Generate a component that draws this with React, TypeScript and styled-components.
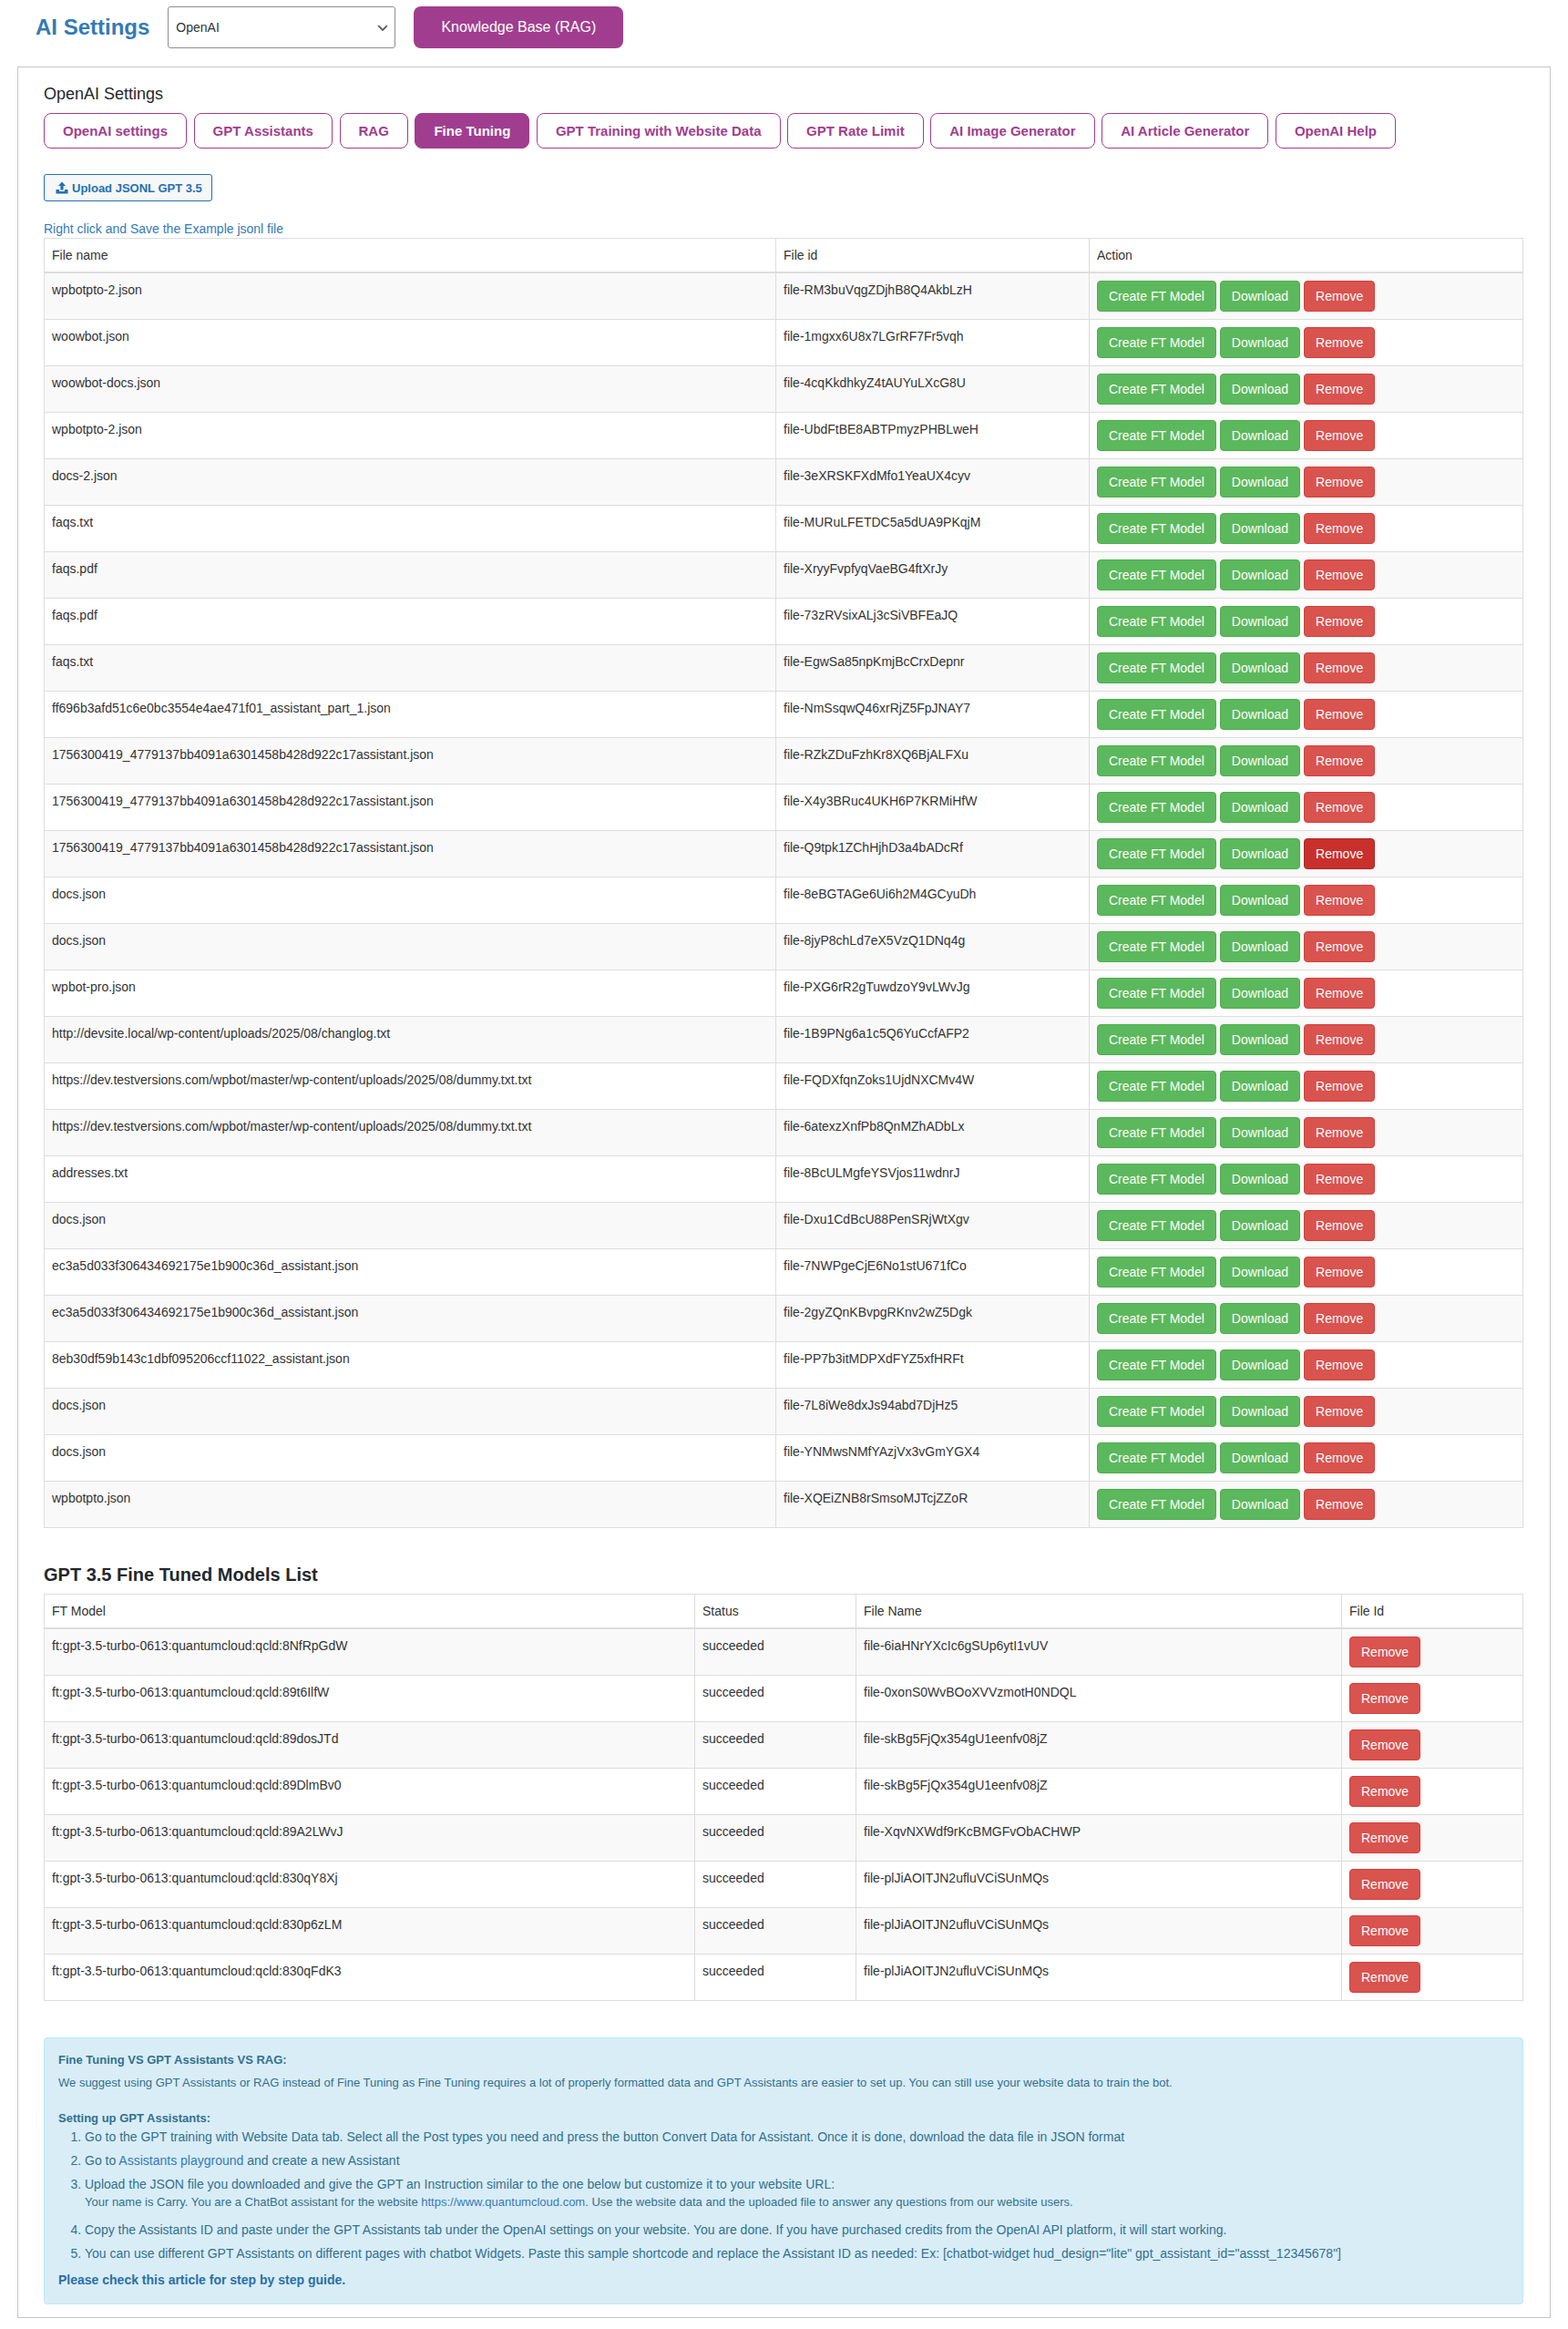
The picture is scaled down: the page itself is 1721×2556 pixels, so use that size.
import styled, { createGlobalStyle } from "styled-components";

const GlobalStyle = createGlobalStyle`
	body {
		margin: 0;
		background: #fff;
		font-family: "Liberation Sans", Arial, sans-serif;
		font-size: 14px;
		line-height: 20px;
		color: #333;
	}
`;

const Page = styled.div`
	width: 1721px;
	height: 2556px;
	box-sizing: border-box;
	padding-top: 7px;
	overflow: hidden;
`;

const Header = styled.header`
	display: flex;
	align-items: center;
	height: 46px;
	padding-left: 39px;
	margin-bottom: 20px;
`;

const Title = styled.h1`
	margin: 0 20px 0 0;
	font-size: 24px;
	line-height: 30px;
	font-weight: 700;
	color: #337ab7;
`;

const ProviderSelect = styled.select`
	width: 250px;
	height: 46px;
	box-sizing: border-box;
	padding: 0 24px 0 8px;
	margin-right: 20px;
	font: 14px "Liberation Sans", Arial, sans-serif;
	color: #2c3338;
	border: 1px solid #8c8f94;
	border-radius: 3px;
	appearance: none;
	background: #fff
		url('data:image/svg+xml;charset=US-ASCII,%3Csvg%20width%3D%2220%22%20height%3D%2220%22%20xmlns%3D%22http%3A%2F%2Fwww.w3.org%2F2000%2Fsvg%22%3E%3Cpath%20d%3D%22M5%206l5%205%205-5%202%201-7%207-7-7%202-1z%22%20fill%3D%22%23555%22%2F%3E%3C%2Fsvg%3E')
		no-repeat right 5px top 55% / 16px 16px;
`;

const KnowledgeButton = styled.button`
	height: 46px;
	width: 230px;
	padding: 0;
	font: 16px "Liberation Sans", Arial, sans-serif;
	color: #fff;
	background: #a13d8f;
	border: 0;
	border-radius: 8px;
`;

const Panel = styled.section`
	width: 1683px;
	height: 2471px;
	box-sizing: border-box;
	margin-left: 19px;
	padding: 19px 29px 0 28px;
	border: 1px solid #c8c8c8;
`;

const PanelTitle = styled.h2`
	margin: 0 0 11px;
	font-size: 18px;
	line-height: 20px;
	font-weight: 400;
	color: #23282d;
`;

const TabBar = styled.nav`
	display: flex;
	gap: 7.6px;
	margin-bottom: 28px;
`;

const Tab = styled.button<{ $active?: boolean }>`
	height: 39px;
	padding: 0 20px;
	font: 700 15px "Liberation Sans", Arial, sans-serif;
	color: ${(p) => (p.$active ? "#fff" : "#a13d8f")};
	background: ${(p) => (p.$active ? "#a13d8f" : "#fff")};
	border: 1px solid #a13d8f;
	border-radius: 8px;
`;

const UploadButton = styled.button`
	display: flex;
	align-items: center;
	gap: 4px;
	height: 30px;
	padding: 0 10px 0 12px;
	font: 700 13px "Liberation Sans", Arial, sans-serif;
	color: #2271b1;
	background: #f6f7f7;
	border: 1px solid #2271b1;
	border-radius: 3px;
`;

const ExampleLink = styled.a`
	display: block;
	margin-top: 20px;
	color: #337ab7;
	text-decoration: none;
`;

const Table = styled.table`
	width: 1624px;
	border-collapse: collapse;
	table-layout: fixed;
	background: #fff;
`;

const HeadCell = styled.th<{ $width?: number }>`
	box-sizing: border-box;
	width: ${(p) => (p.$width ? `${p.$width}px` : "auto")};
	padding: 8px;
	font-weight: 400;
	text-align: left;
	line-height: 20px;
	border: 1px solid #ddd;
	border-bottom-width: 2px;
`;

const Row = styled.tr`
	&:nth-child(odd) {
		background: #f9f9f9;
	}
`;

const Cell = styled.td`
	height: 34px;
	padding: 8px;
	vertical-align: top;
	line-height: 20px;
	border: 1px solid #ddd;
`;

const ActionButton = styled.button<{ $kind: "success" | "danger"; $hover?: boolean }>`
	display: inline-block;
	height: 34px;
	padding: 6px 12px;
	margin-right: 4px;
	vertical-align: top;
	font: 14px/20px "Liberation Sans", Arial, sans-serif;
	color: #fff;
	border-radius: 4px;
	border: 1px solid
		${(p) =>
			p.$kind === "success" ? "#4cae4c" : p.$hover ? "#ac2925" : "#d43f3a"};
	background: ${(p) =>
		p.$kind === "success" ? "#5cb85c" : p.$hover ? "#c9302c" : "#d9534f"};
`;

const SectionHeading = styled.h3`
	margin: 40px 0 10px;
	font-size: 20px;
	line-height: 22px;
	font-weight: 700;
	color: #23282d;
`;

const Notice = styled.div`
	box-sizing: border-box;
	height: 293px;
	margin-top: 40px;
	padding: 14px 15px;
	font-size: 13px;
	line-height: 20px;
	color: #31708f;
	background: #d9edf7;
	border: 1px solid #bce8f1;
	border-radius: 4px;
`;

const NoticeText = styled.p`
	margin: 0 0 5px;
	font-size: 13px;
`;

const NoticeHeading = styled.strong`
	display: block;
	font-size: 13px;
	margin-bottom: 5px;
`;

const SetupHeading = styled(NoticeHeading)`
	margin: 19px 0 0;
`;

const Steps = styled.ol`
	margin: 0 0 9px;
	padding-left: 29px;
	font-size: 14px;
`;

const Step = styled.li`
	margin-bottom: 6px;
`;

const StepNote = styled.div`
	margin-bottom: 10px;
	font-size: 13px;
`;

const NoticeLink = styled.a`
	color: #337ab7;
	text-decoration: none;
`;

const GuideLink = styled.a`
	font-weight: 700;
	font-size: 14px;
	color: #2a6ea8;
	text-decoration: none;
`;

const UploadIcon = () => (
	<svg width="14" height="14" viewBox="0 0 14 14" fill="#2271b1">
		<path d="M7 0.5 11 5H8.6v4.5H5.4V5H3z" />
		<path d="M0.5 9h3.6v2h5.8V9h3.6v4.5H.5z" />
	</svg>
);

const tabs = [
	"OpenAI settings",
	"GPT Assistants",
	"RAG",
	"Fine Tuning",
	"GPT Training with Website Data",
	"GPT Rate Limit",
	"AI Image Generator",
	"AI Article Generator",
	"OpenAI Help",
];

const ASSISTANT_FILE = "1756300419_4779137bb4091a6301458b428d922c17assistant.json";
const DUMMY_URL =
	"https://dev.testversions.com/wpbot/master/wp-content/uploads/2025/08/dummy.txt.txt";
const EC_FILE = "ec3a5d033f306434692175e1b900c36d_assistant.json";

const files = [
	["wpbotpto-2.json", "file-RM3buVqgZDjhB8Q4AkbLzH"],
	["woowbot.json", "file-1mgxx6U8x7LGrRF7Fr5vqh"],
	["woowbot-docs.json", "file-4cqKkdhkyZ4tAUYuLXcG8U"],
	["wpbotpto-2.json", "file-UbdFtBE8ABTPmyzPHBLweH"],
	["docs-2.json", "file-3eXRSKFXdMfo1YeaUX4cyv"],
	["faqs.txt", "file-MURuLFETDC5a5dUA9PKqjM"],
	["faqs.pdf", "file-XryyFvpfyqVaeBG4ftXrJy"],
	["faqs.pdf", "file-73zRVsixALj3cSiVBFEaJQ"],
	["faqs.txt", "file-EgwSa85npKmjBcCrxDepnr"],
	["ff696b3afd51c6e0bc3554e4ae471f01_assistant_part_1.json", "file-NmSsqwQ46xrRjZ5FpJNAY7"],
	[ASSISTANT_FILE, "file-RZkZDuFzhKr8XQ6BjALFXu"],
	[ASSISTANT_FILE, "file-X4y3BRuc4UKH6P7KRMiHfW"],
	[ASSISTANT_FILE, "file-Q9tpk1ZChHjhD3a4bADcRf"],
	["docs.json", "file-8eBGTAGe6Ui6h2M4GCyuDh"],
	["docs.json", "file-8jyP8chLd7eX5VzQ1DNq4g"],
	["wpbot-pro.json", "file-PXG6rR2gTuwdzoY9vLWvJg"],
	["http://devsite.local/wp-content/uploads/2025/08/changlog.txt", "file-1B9PNg6a1c5Q6YuCcfAFP2"],
	[DUMMY_URL, "file-FQDXfqnZoks1UjdNXCMv4W"],
	[DUMMY_URL, "file-6atexzXnfPb8QnMZhADbLx"],
	["addresses.txt", "file-8BcULMgfeYSVjos11wdnrJ"],
	["docs.json", "file-Dxu1CdBcU88PenSRjWtXgv"],
	[EC_FILE, "file-7NWPgeCjE6No1stU671fCo"],
	[EC_FILE, "file-2gyZQnKBvpgRKnv2wZ5Dgk"],
	["8eb30df59b143c1dbf095206ccf11022_assistant.json", "file-PP7b3itMDPXdFYZ5xfHRFt"],
	["docs.json", "file-7L8iWe8dxJs94abd7DjHz5"],
	["docs.json", "file-YNMwsNMfYAzjVx3vGmYGX4"],
	["wpbotpto.json", "file-XQEiZNB8rSmsoMJTcjZZoR"],
];

const MODEL_PREFIX = "ft:gpt-3.5-turbo-0613:quantumcloud:qcld:";

const models = [
	["8NfRpGdW", "file-6iaHNrYXcIc6gSUp6ytI1vUV"],
	["89t6IlfW", "file-0xonS0WvBOoXVVzmotH0NDQL"],
	["89dosJTd", "file-skBg5FjQx354gU1eenfv08jZ"],
	["89DlmBv0", "file-skBg5FjQx354gU1eenfv08jZ"],
	["89A2LWvJ", "file-XqvNXWdf9rKcBMGFvObACHWP"],
	["830qY8Xj", "file-plJiAOITJN2ufluVCiSUnMQs"],
	["830p6zLM", "file-plJiAOITJN2ufluVCiSUnMQs"],
	["830qFdK3", "file-plJiAOITJN2ufluVCiSUnMQs"],
];

const App = () => {
	return (
		<Page>
			<GlobalStyle />
			<Header>
				<Title>AI Settings</Title>
				<ProviderSelect defaultValue="OpenAI">
					<option>OpenAI</option>
				</ProviderSelect>
				<KnowledgeButton>Knowledge Base (RAG)</KnowledgeButton>
			</Header>
			<Panel>
				<PanelTitle>OpenAI Settings</PanelTitle>
				<TabBar>
					{tabs.map((tab) => (
						<Tab key={tab} $active={tab === "Fine Tuning"}>
							{tab}
						</Tab>
					))}
				</TabBar>
				<UploadButton>
					<UploadIcon />
					Upload JSONL GPT 3.5
				</UploadButton>
				<ExampleLink href="#">Right click and Save the Example jsonl file</ExampleLink>
				<Table>
					<thead>
						<tr>
							<HeadCell $width={803}>File name</HeadCell>
							<HeadCell $width={344}>File id</HeadCell>
							<HeadCell>Action</HeadCell>
						</tr>
					</thead>
					<tbody>
						{files.map(([name, id], i) => (
							<Row key={id}>
								<Cell>{name}</Cell>
								<Cell>{id}</Cell>
								<Cell>
									<ActionButton $kind="success">Create FT Model</ActionButton>
									<ActionButton $kind="success">Download</ActionButton>
									<ActionButton $kind="danger" $hover={i === 12}>
										Remove
									</ActionButton>
								</Cell>
							</Row>
						))}
					</tbody>
				</Table>
				<SectionHeading>GPT 3.5 Fine Tuned Models List</SectionHeading>
				<Table>
					<thead>
						<tr>
							<HeadCell $width={714}>FT Model</HeadCell>
							<HeadCell $width={177}>Status</HeadCell>
							<HeadCell $width={533}>File Name</HeadCell>
							<HeadCell>File Id</HeadCell>
						</tr>
					</thead>
					<tbody>
						{models.map(([suffix, file]) => (
							<Row key={suffix}>
								<Cell>{MODEL_PREFIX + suffix}</Cell>
								<Cell>succeeded</Cell>
								<Cell>{file}</Cell>
								<Cell>
									<ActionButton $kind="danger">Remove</ActionButton>
								</Cell>
							</Row>
						))}
					</tbody>
				</Table>
				<Notice>
					<NoticeHeading>Fine Tuning VS GPT Assistants VS RAG:</NoticeHeading>
					<NoticeText>
						We suggest using GPT Assistants or RAG instead of Fine Tuning as Fine Tuning requires a
						lot of properly formatted data and GPT Assistants are easier to set up. You can still use
						your website data to train the bot.
					</NoticeText>
					<SetupHeading>Setting up GPT Assistants:</SetupHeading>
					<Steps>
						<Step>
							Go to the GPT training with Website Data tab. Select all the Post types you need and
							press the button Convert Data for Assistant. Once it is done, download the data file in
							JSON format
						</Step>
						<Step>
							Go to <NoticeLink href="#">Assistants playground</NoticeLink> and create a new
							Assistant
						</Step>
						<Step>
							Upload the JSON file you downloaded and give the GPT an Instruction similar to the one
							below but customize it to your website URL:
							<StepNote>
								Your name is Carry. You are a ChatBot assistant for the website{" "}
								<NoticeLink href="#">https://www.quantumcloud.com</NoticeLink>. Use the website data
								and the uploaded file to answer any questions from our website users.
							</StepNote>
						</Step>
						<Step>
							Copy the Assistants ID and paste under the GPT Assistants tab under the OpenAI settings
							on your website. You are done. If you have purchased credits from the OpenAI API
							platform, it will start working.
						</Step>
						<Step>
							You can use different GPT Assistants on different pages with chatbot Widgets. Paste
							this sample shortcode and replace the Assistant ID as needed: Ex: [chatbot-widget
							hud_design="lite" gpt_assistant_id="assst_12345678"]
						</Step>
					</Steps>
					<GuideLink href="#">Please check this article for step by step guide.</GuideLink>
				</Notice>
			</Panel>
		</Page>
	);
};

export default App;
